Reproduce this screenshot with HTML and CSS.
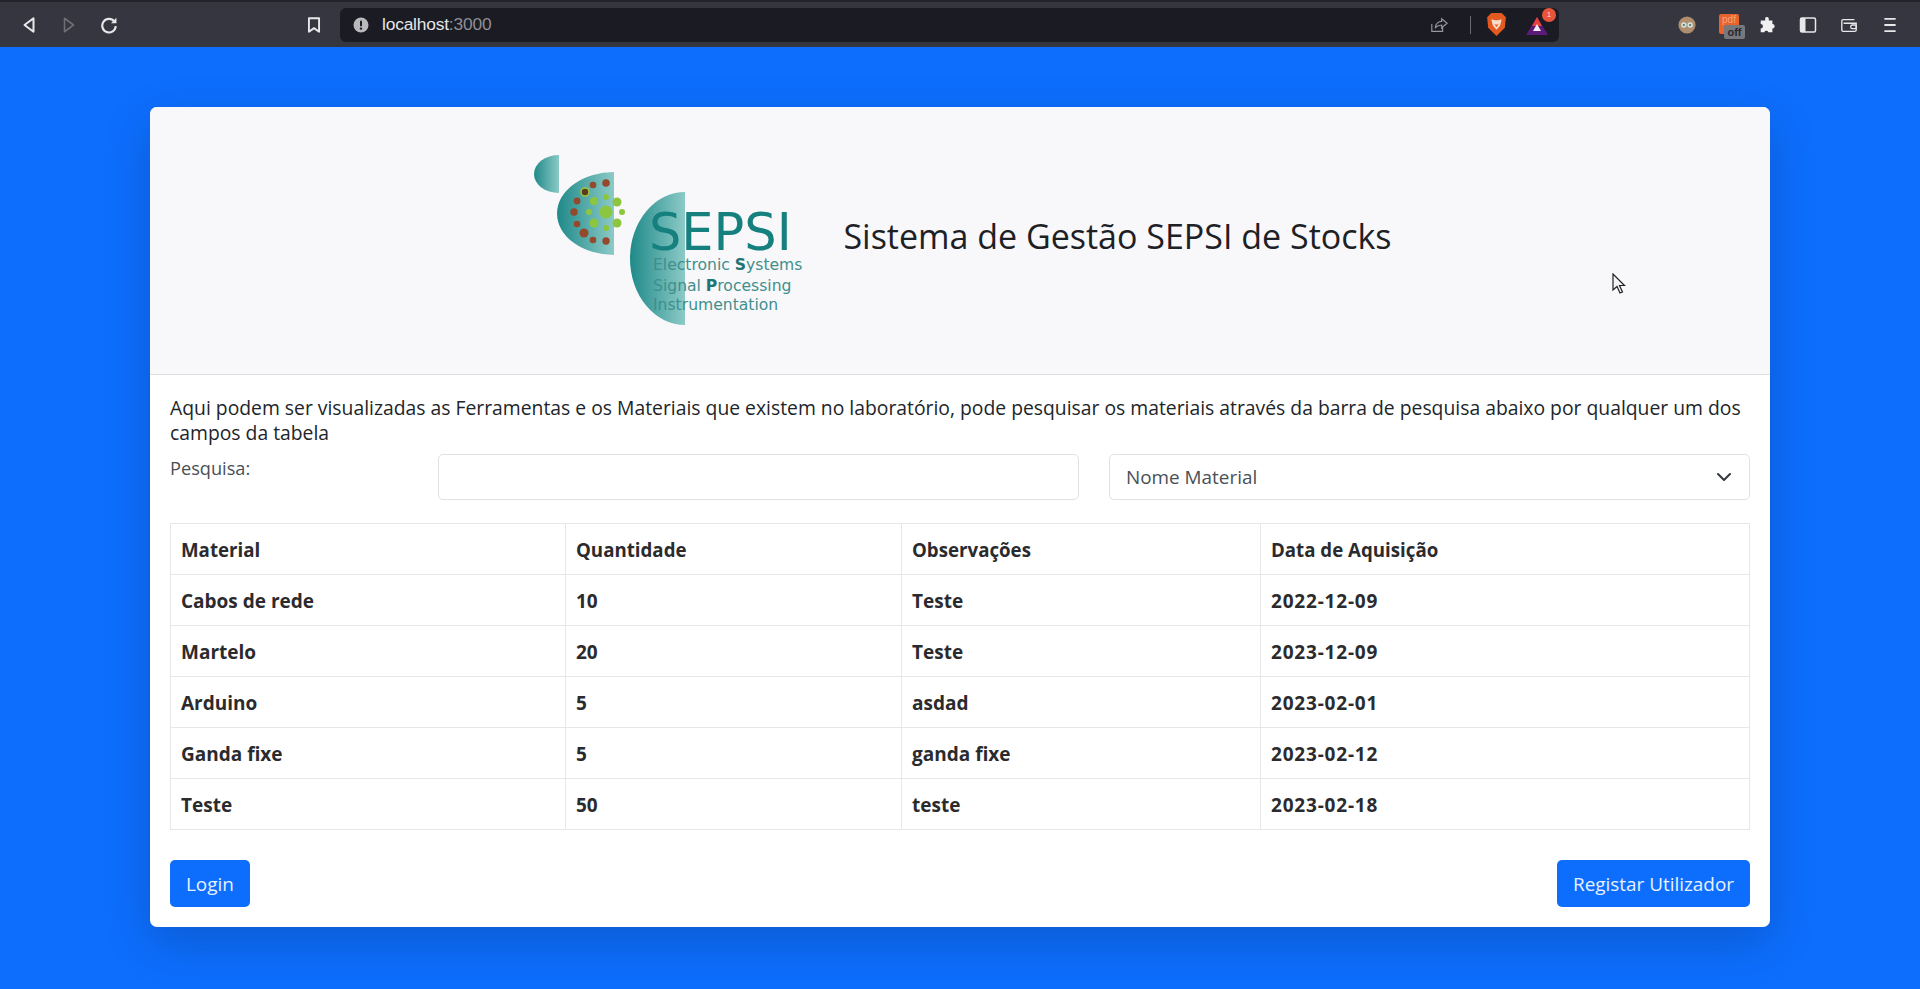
FILE: index.html
```html
<!DOCTYPE html>
<html lang="pt">
<head>
    <meta charset="UTF-8">
    <meta name="viewport" content="width=device-width, initial-scale=1.0">
    <title>Sistema de Gestão SEPSI de Stocks</title>
    <link rel="stylesheet" href="styles.css">
</head>
<body>

    <div class="browser-bar">
        <div class="nav-icons">
            <svg class="icon" viewBox="0 0 16 16"><path d="M12 2 L4 8 L12 14 Z" fill="none" stroke="#e8e8ea" stroke-width="1.8" stroke-linejoin="round"/></svg>
            <svg class="icon" viewBox="0 0 16 16"><path d="M4 2 L12 8 L4 14 Z" fill="none" stroke="#6d6e76" stroke-width="1.4" stroke-linejoin="round"/></svg>
            <svg class="icon" viewBox="0 0 16 16"><path d="M12.8 5 A6 6 0 1 0 14 9" fill="none" stroke="#e8e8ea" stroke-width="1.9"/><path d="M14.6 1.5 V6.4 H9.8 Z" fill="#e8e8ea"/></svg>
        </div>
        <svg class="icon bookmark" viewBox="0 0 16 16"><path d="M3.5 2 H12.5 V14 L8 10.8 L3.5 14 Z" fill="none" stroke="#e8e8ea" stroke-width="1.7" stroke-linejoin="round"/></svg>
        <div class="address">
            <svg class="icon-sm" viewBox="0 0 16 16"><circle cx="8" cy="8" r="7.5" fill="#b9b9bd"/><rect x="7" y="3.4" width="2" height="6" rx="1" fill="#1b1b23"/><circle cx="8" cy="11.6" r="1.2" fill="#1b1b23"/></svg>
            <span class="url">localhost<span class="port">:3000</span></span>
            <div class="address-right">
                <svg class="icon share" viewBox="0 0 20 20"><path d="M2 9 V17 H14 V13 M6 13 C6 8 10 6 13 6 V3 L19 8 L13 13 V10 C10 10 8 11 6 13 Z" fill="none" stroke="#97979d" stroke-width="1.3"/></svg>
                <span class="divider"></span>
                <svg class="brave" viewBox="0 0 20 24"><path d="M5 1 H15 L19 5 L18 15 L10 23 L2 15 L1 5 Z" fill="#e4591f"/><path d="M5 7 L8.5 8 H11.5 L15 7 L13.5 13 L10 17 L6.5 13 Z" fill="#f8dcc8"/><path d="M8 12 H12 L10 14.5 Z" fill="#e4591f"/></svg>
                <div class="rewards">
                    <svg class="bat" viewBox="0 0 24 20"><path d="M12 1 L23 19 H1 Z" fill="#5b1a7a"/><path d="M12 1 L17 10 H7 Z" fill="#e8413a"/><path d="M12 8 L16 15 H8 Z" fill="#f2eef6"/></svg>
                    <span class="badge">1</span>
                </div>
            </div>
        </div>
        <div class="ext-icons">
            <svg class="icon" viewBox="0 0 20 20"><circle cx="10" cy="10" r="9.5" fill="#b08d6e"/><circle cx="6.5" cy="10" r="3" fill="#cfe3dc"/><circle cx="13.5" cy="10" r="3" fill="#cfe3dc"/><circle cx="6.5" cy="10" r="1.2" fill="#4d6b66"/><circle cx="13.5" cy="10" r="1.2" fill="#4d6b66"/></svg>
            <div class="pdf-ext">
                <span class="pdf-square">pdf</span>
                <span class="pdf-off">off</span>
            </div>
            <svg class="icon puzzle" viewBox="0 0 20 20"><path d="M8 2 A2.2 2.2 0 0 1 12 2.8 V5 H16 V9 A2.4 2.4 0 0 1 16 14 V18 H11.5 A2.4 2.4 0 0 0 7 18 H3 V14 A2.4 2.4 0 0 0 3 9 V5 H8 Z" fill="#f0f0f2"/></svg>
            <svg class="icon" viewBox="0 0 18 18"><rect x="1.5" y="2" width="15" height="14" rx="1.5" fill="none" stroke="#e8e8ea" stroke-width="1.5"/><rect x="1.5" y="2" width="5" height="14" fill="#e8e8ea"/></svg>
            <svg class="icon" viewBox="0 0 20 18"><path d="M16 3 H3.5 A1.5 1.5 0 0 0 2 4.5 V14.5 A1.5 1.5 0 0 0 3.5 16 H16.5 A1.5 1.5 0 0 0 18 14.5 V7 H4" fill="none" stroke="#e8e8ea" stroke-width="1.5"/><rect x="12" y="9" width="6" height="4" rx="1.5" fill="none" stroke="#e8e8ea" stroke-width="1.4"/></svg>
            <svg class="icon" viewBox="0 0 16 16"><path d="M3 2.5 H13 M3 8 H13 M3 13.5 H13" stroke="#e8e8ea" stroke-width="1.6"/></svg>
        </div>
    </div>

    <main class="card">
        <header class="card-header">
            <svg class="logo" viewBox="0 0 272 178">
                <defs>
                    <linearGradient id="teal" x1="0" x2="1" y1="0" y2="0">
                        <stop offset="0" stop-color="#1f8a89"/>
                        <stop offset="1" stop-color="#8ccac7"/>
                    </linearGradient>
                </defs>
                <path d="M26 2 A25 19 0 0 0 26 40 Z" fill="url(#teal)"/>
                <path d="M81 19 A57 41.5 0 0 0 81 102 Z" fill="url(#teal)"/>
                <path d="M152 39 A55 66.5 0 0 0 152 172 Z" fill="url(#teal)"/>
                <g fill="#94492c">
                    <circle cx="60" cy="32" r="3.3"/><circle cx="73" cy="30" r="3.8"/>
                    <circle cx="44" cy="48" r="3.4"/><circle cx="41" cy="59" r="3.7"/><circle cx="44" cy="71" r="3.3"/>
                    <circle cx="51" cy="80" r="4.5"/><circle cx="60" cy="87" r="3.3"/><circle cx="73" cy="88" r="3.7"/>
                </g>
                <circle cx="52" cy="39" r="4" fill="#5c3a1c" stroke="#9ec43c" stroke-width="1.6"/>
                <g fill="#8cc63f">
                    <circle cx="61" cy="48" r="4"/><circle cx="73" cy="44" r="3"/><circle cx="84" cy="49" r="4.5"/>
                    <circle cx="89" cy="59" r="3"/><circle cx="73" cy="59" r="6.5"/><circle cx="56" cy="59" r="3"/>
                    <circle cx="61" cy="70" r="4.5"/><circle cx="73" cy="75" r="3"/><circle cx="84" cy="70" r="4.5"/>
                </g>
                <text class="logo-big" x="116" y="97">SEPSI</text>
                <text class="logo-small" x="120" y="117">Electronic <tspan class="logo-bold">S</tspan>ystems</text>
                <text class="logo-small" x="120" y="138">Signal <tspan class="logo-bold">P</tspan>rocessing</text>
                <text class="logo-small" x="120" y="157">Instrumentation</text>
            </svg>
            <h1>Sistema de Gestão SEPSI de Stocks</h1>
            <svg class="cursor" viewBox="0 0 14 22"><path d="M1 1 V17 L5 13.5 L8 20 L10.5 19 L7.5 12.5 H12.5 Z" fill="#f4f4f6" stroke="#222" stroke-width="1.2"/></svg>
        </header>

        <div class="card-body">
            <p class="intro">Aqui podem ser visualizadas as Ferramentas e os Materiais que existem no laboratório, pode pesquisar os materiais através da barra de pesquisa abaixo por qualquer um dos campos da tabela</p>

            <div class="search-row">
                <label for="pesquisa">Pesquisa:</label>
                <input type="text" id="pesquisa">
                <div class="select-box">
                    <span>Nome Material</span>
                    <svg class="chevron" viewBox="0 0 16 16"><path d="M2 5 L8 11 L14 5" fill="none" stroke="#343a40" stroke-width="2" stroke-linecap="round" stroke-linejoin="round"/></svg>
                </div>
            </div>

            <table>
                <thead>
                    <tr>
                        <th class="col-material">Material</th>
                        <th class="col-qtd">Quantidade</th>
                        <th class="col-obs">Observações</th>
                        <th>Data de Aquisição</th>
                    </tr>
                </thead>
                <tbody>
                    <tr><td>Cabos de rede</td><td>10</td><td>Teste</td><td class="date">2022-12-09</td></tr>
                    <tr><td>Martelo</td><td>20</td><td>Teste</td><td class="date">2023-12-09</td></tr>
                    <tr><td>Arduino</td><td>5</td><td>asdad</td><td class="date">2023-02-01</td></tr>
                    <tr><td>Ganda fixe</td><td>5</td><td>ganda fixe</td><td class="date">2023-02-12</td></tr>
                    <tr><td>Teste</td><td>50</td><td>teste</td><td class="date">2023-02-18</td></tr>
                </tbody>
            </table>

            <div class="actions">
                <button type="button" class="btn">Login</button>
                <button type="button" class="btn">Registar Utilizador</button>
            </div>
        </div>
    </main>

</body>
</html>
```

FILE: styles.css
```css
html, body {
    margin: 0;
    height: 989px;
    overflow: hidden;
}
body {
    font-family: "Open Sans", "Noto Sans", sans-serif;
    background-color: #0d6efd;
    color: #212529;
}

/* barra do browser */
.browser-bar {
    height: 47px;
    box-sizing: border-box;
    background-color: #35363f;
    border-top: 2px solid #24252c;
    display: flex;
    align-items: center;
    padding-left: 20px;
}
.icon {
    width: 18px;
    height: 18px;
    flex: none;
}
.icon-sm {
    width: 16px;
    height: 16px;
    flex: none;
}
.nav-icons {
    display: flex;
    gap: 22px;
}
.bookmark {
    margin-left: 187px;
}
.address {
    margin-left: 17px;
    width: 1219px;
    height: 34px;
    box-sizing: border-box;
    background-color: #1b1b23;
    border-radius: 6px;
    display: flex;
    align-items: center;
    padding: 0 8px 0 13px;
    color: #e6e6e8;
    font-family: "Liberation Sans", sans-serif;
    font-size: 17.4px;
}
.url {
    margin-left: 13px;
    letter-spacing: -0.2px;
}
.port {
    color: #8f8f95;
}
.address-right {
    margin-left: auto;
    display: flex;
    align-items: center;
}
.divider {
    width: 1px;
    height: 18px;
    background-color: #6a6a70;
    margin: 0 15px 0 22px;
}
.brave {
    width: 21px;
    height: 25px;
}
.rewards {
    position: relative;
    margin-left: 18px;
    width: 26px;
    height: 22px;
}
.bat {
    width: 24px;
    height: 20px;
    margin-top: 2px;
    display: block;
}
.badge {
    position: absolute;
    top: -6px;
    right: -5px;
    width: 14px;
    height: 14px;
    border-radius: 50%;
    background-color: #e8543a;
    color: #fbd9d0;
    font-size: 8px;
    line-height: 14px;
    text-align: center;
}
.ext-icons {
    margin-left: 119px;
    display: flex;
    align-items: center;
    gap: 23px;
}
.puzzle {
    margin-left: -4px;
}
.pdf-ext {
    position: relative;
    width: 20px;
    height: 22px;
}
.pdf-square {
    display: block;
    width: 20px;
    height: 20px;
    background-color: #e8622a;
    border-radius: 2px;
    color: #f5a583;
    font-family: "Liberation Sans", sans-serif;
    font-size: 10px;
    line-height: 12px;
    text-align: center;
}
.pdf-off {
    position: absolute;
    left: 5px;
    top: 11px;
    width: 21px;
    height: 14px;
    background-color: #77787d;
    color: #26272c;
    border-radius: 2px;
    font-family: "Liberation Sans", sans-serif;
    font-size: 11px;
    font-weight: bold;
    line-height: 14px;
    text-align: center;
}

/* cartao */
.card {
    width: 1620px;
    height: 820px;
    margin: 60px auto 0;
    background-color: #fff;
    border-radius: 7px;
    box-shadow: 0 16px 48px rgba(0, 0, 0, 0.175);
    overflow: hidden;
}
.card-header {
    position: relative;
    height: 267px;
    background-color: #f8f7fa;
    border-bottom: 1px solid #dfdfe2;
    display: flex;
    align-items: center;
    justify-content: center;
    gap: 38px;
    padding-left: 5px;
}
.logo {
    width: 272px;
    height: 178px;
    margin-top: 3px;
}
.logo-big {
    font-family: "DejaVu Sans", sans-serif;
    font-size: 51px;
    fill: #16807f;
}
.logo-small {
    font-family: "DejaVu Sans", sans-serif;
    font-size: 15.6px;
    fill: #3f8f8d;
}
.logo-bold {
    font-weight: bold;
    fill: #1d7574;
}
h1 {
    margin: 0 0 10px;
    font-size: 34px;
    font-weight: 400;
    color: #1d2125;
}
.cursor {
    position: absolute;
    left: 1462px;
    top: 166px;
    width: 14px;
    height: 22px;
}
.card-body {
    padding: 21px 20px 0;
}
.intro {
    margin: 0;
    font-size: 19.34px;
    line-height: 24.5px;
    font-weight: 500;
}
.search-row {
    display: grid;
    grid-template-columns: 238px 641px 641px;
    column-gap: 30px;
    margin-top: 9px;
}
.search-row label {
    font-size: 18.2px;
    color: #495057;
    line-height: 24px;
    margin-top: 2px;
}
.search-row input {
    height: 46px;
    box-sizing: border-box;
    border: 1px solid #dee2e6;
    border-radius: 5px;
    background-color: #fff;
}
.select-box {
    height: 46px;
    box-sizing: border-box;
    border: 1px solid #dee2e6;
    border-radius: 5px;
    display: flex;
    align-items: center;
    justify-content: space-between;
    padding: 0 17px 0 16px;
    font-size: 18.9px;
    color: #495057;
}
.chevron {
    width: 16px;
    height: 16px;
}
table {
    width: 1580px;
    margin-top: 23px;
    border-collapse: collapse;
    table-layout: fixed;
}
table, th, td {
    border: 1px solid #e6e7e9;
}
th, td {
    height: 51px;
    box-sizing: border-box;
    padding: 0 10px;
    text-align: left;
    font-size: 18.7px;
    font-weight: 700;
    color: #2b2b2e;
}
td {
    font-size: 19px;
    padding-top: 2px;
}
td.date {
    letter-spacing: 0.8px;
}
.col-material { width: 395px; }
.col-qtd { width: 336px; }
.col-obs { width: 359px; }
.actions {
    display: flex;
    justify-content: space-between;
    margin-top: 30px;
}
.btn {
    height: 47px;
    padding: 0 16px;
    background-color: #0d6efd;
    color: #e8f1ff;
    border: none;
    border-radius: 5px;
    font-family: inherit;
    font-size: 18.9px;
    cursor: pointer;
}
```
